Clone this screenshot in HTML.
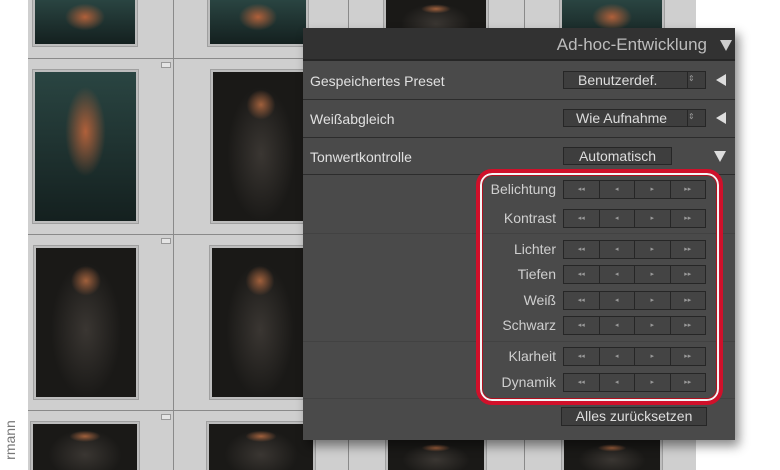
<!DOCTYPE html>
<html><head><meta charset="utf-8"><style>
*{margin:0;padding:0;box-sizing:border-box}
html,body{width:780px;height:470px;overflow:hidden}
body{position:relative;background:#fff;font-family:"Liberation Sans",sans-serif}
.grid{position:absolute;left:28px;top:0;width:668px;height:470px;background:#cfcfcf;overflow:hidden}
.vl{position:absolute;top:0;width:1px;height:470px;background:#8a8a8a}
.hl{position:absolute;left:0;width:668px;height:1px;background:#8a8a8a}
.th{position:absolute;background:#1c1c1c;border:2px solid #bdbdbd;outline:1px solid #a0a0a0}
.badge{position:absolute;width:10px;height:6px;border:1px solid #999;background:#e4e4e4}
.panel{position:absolute;left:303px;top:28px;width:432px;height:412px;background:#4a4a4a;box-shadow:4px 6px 10px rgba(0,0,0,.45);color:#ddd}
.hdr{position:absolute;left:0;top:0;width:432px;height:33px;background:#323232;border-bottom:2px solid #262626}
.hdr span{position:absolute;right:28px;top:7px;font-size:17px;color:#bcbcbc}
.tri{position:absolute;width:0;height:0}
.sep{position:absolute;left:0;width:432px;height:1px;background:#2c2c2c}
.lbl{position:absolute;font-size:14px;color:#e0e0e0}
.rl{position:absolute;font-size:14px;color:#cfcfcf;right:179px;text-align:right}
.fld{position:absolute;height:18px;background:#3e3e3e;border:1px solid #262626;font-size:14px;color:#ddd;text-align:center;line-height:16px}
.btns{position:absolute;left:260px;width:143px;height:19px;display:flex;border:1px solid #262626;background:#444}
.btns div{flex:1;border-right:1px solid #262626;color:#999;font-size:7px;text-align:center;line-height:17px}
.btns div:last-child{border-right:none}
.red{position:absolute;left:476px;top:169px;width:247px;height:236px;border:4px solid #d0102a;border-radius:16px;box-shadow:inset 0 0 0 2px #f4f4f4, inset 0 0 0 3px #b0101f}
.g1{background:radial-gradient(ellipse 20% 30% at 50% 40%,#b0603a,transparent),linear-gradient(#2a4542,#14201f)}
.g2{background:radial-gradient(ellipse 15% 10% at 50% 22%,#a0603c,transparent),radial-gradient(ellipse 35% 45% at 50% 55%,#3a3632,#1a1917)}
</style></head><body>
<div class="grid">
 <div class="vl" style="left:145px"></div><div class="vl" style="left:320px"></div><div class="vl" style="left:496px"></div>
 <div class="hl" style="top:58px"></div><div class="hl" style="top:234px"></div><div class="hl" style="top:410px"></div>
 <div class="th g1" style="left:5px;top:-3px;width:104px;height:49px"></div>
 <div class="th g1" style="left:180px;top:-3px;width:100px;height:49px"></div>
 <div class="th g2" style="left:356px;top:-3px;width:104px;height:49px"></div>
 <div class="th g1" style="left:532px;top:-3px;width:104px;height:49px"></div>
 <div class="th g1" style="left:5px;top:70px;width:105px;height:153px"></div>
 <div class="th g2" style="left:183px;top:70px;width:100px;height:153px"></div>
 <div class="th g2" style="left:6px;top:246px;width:104px;height:153px"></div>
 <div class="th g2" style="left:182px;top:246px;width:100px;height:153px"></div>
 <div class="th g2" style="left:3px;top:422px;width:108px;height:60px"></div>
 <div class="th g2" style="left:179px;top:422px;width:108px;height:60px"></div>
 <div class="th g2" style="left:358px;top:438px;width:100px;height:40px"></div>
 <div class="th g2" style="left:534px;top:438px;width:100px;height:40px"></div>
 <div class="badge" style="left:133px;top:62px"></div><div class="badge" style="left:133px;top:238px"></div><div class="badge" style="left:133px;top:414px"></div>
</div>
<div style="position:absolute;left:-10px;top:432px;transform:rotate(-90deg);font-size:14px;color:#777">rmann</div>
<div class="panel">
 <div class="hdr"><span>Ad-hoc-Entwicklung</span>
  <div class="tri" style="left:417px;top:12px;border-left:6px solid transparent;border-right:6px solid transparent;border-top:11px solid #ccc"></div></div>
 <div class="sep" style="top:71px"></div><div class="sep" style="top:109px"></div><div class="sep" style="top:146px"></div>
 <div class="sep" style="top:205px;background:#424242"></div><div class="sep" style="top:313px;background:#424242"></div><div class="sep" style="top:370px;background:#424242"></div>
 <div class="lbl" style="left:7px;top:45px">Gespeichertes Preset</div>
 <div class="fld" style="left:260px;top:43px;width:143px;text-align:left;padding-left:14px">Benutzerdef.<span style="position:absolute;right:0;top:-1px;width:18px;height:18px;border-left:1px solid #262626;font-size:8px;color:#999">⇕</span></div>
 <div class="tri" style="left:413px;top:46px;border-top:6px solid transparent;border-bottom:6px solid transparent;border-right:10px solid #ddd"></div>
 <div class="lbl" style="left:7px;top:83px">Weißabgleich</div>
 <div class="fld" style="left:260px;top:81px;width:143px;text-align:left;padding-left:12px">Wie Aufnahme<span style="position:absolute;right:0;top:-1px;width:18px;height:18px;border-left:1px solid #262626;font-size:8px;color:#999">⇕</span></div>
 <div class="tri" style="left:413px;top:84px;border-top:6px solid transparent;border-bottom:6px solid transparent;border-right:10px solid #ddd"></div>
 <div class="lbl" style="left:7px;top:121px">Tonwertkontrolle</div>
 <div class="fld" style="left:260px;top:119px;width:109px">Automatisch</div>
 <div class="tri" style="left:411px;top:123px;border-left:6px solid transparent;border-right:6px solid transparent;border-top:11px solid #ddd"></div>
 <div class="rl" style="top:153px">Belichtung</div><div class="btns" style="top:152px"><div>◂◂</div><div>◂</div><div>▸</div><div>▸▸</div></div>
 <div class="rl" style="top:182px">Kontrast</div><div class="btns" style="top:181px"><div>◂◂</div><div>◂</div><div>▸</div><div>▸▸</div></div>
 <div class="rl" style="top:213px">Lichter</div><div class="btns" style="top:212px"><div>◂◂</div><div>◂</div><div>▸</div><div>▸▸</div></div>
 <div class="rl" style="top:238px">Tiefen</div><div class="btns" style="top:237px"><div>◂◂</div><div>◂</div><div>▸</div><div>▸▸</div></div>
 <div class="rl" style="top:264px">Weiß</div><div class="btns" style="top:263px"><div>◂◂</div><div>◂</div><div>▸</div><div>▸▸</div></div>
 <div class="rl" style="top:289px">Schwarz</div><div class="btns" style="top:288px"><div>◂◂</div><div>◂</div><div>▸</div><div>▸▸</div></div>
 <div class="rl" style="top:320px">Klarheit</div><div class="btns" style="top:319px"><div>◂◂</div><div>◂</div><div>▸</div><div>▸▸</div></div>
 <div class="rl" style="top:346px">Dynamik</div><div class="btns" style="top:345px"><div>◂◂</div><div>◂</div><div>▸</div><div>▸▸</div></div>
 <div class="fld" style="left:258px;top:379px;width:146px;height:19px;line-height:17px">Alles zurücksetzen</div>
</div>
<div class="red"></div>
</body></html>
